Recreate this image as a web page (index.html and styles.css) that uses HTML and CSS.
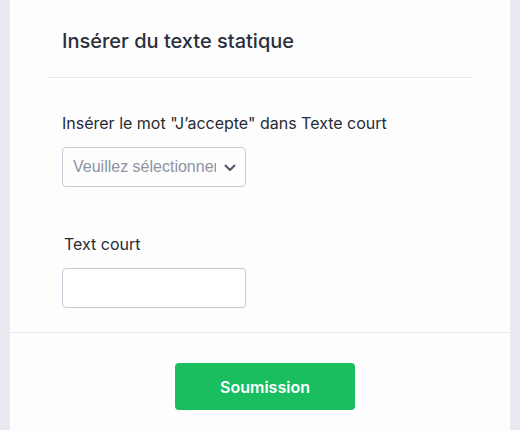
FILE: index.html
```html
<!DOCTYPE html>
<html lang="fr">
<head>
  <meta charset="UTF-8">
  <title>Insérer du texte statique</title>
  <link rel="stylesheet" href="styles.css">
</head>
<body>
  <div class="panneau">
    <div class="entete">
      <h2 class="titre">Insérer du texte statique</h2>
    </div>
    <div class="corps">
      <div class="champ">
        <label class="etiquette">Insérer le mot "J’accepte" dans Texte court</label>
        <div class="selection">
          <span class="placeholder">Veuillez sélectionner</span>
          <svg class="chevron" width="14" height="9" viewBox="0 0 14 9"><path d="M2.5 2.5l4.5 4.5 4.5-4.5" fill="none" stroke="#4b5563" stroke-width="2" stroke-linecap="round" stroke-linejoin="round"/></svg>
        </div>
      </div>
      <div class="champ champ-texte">
        <label class="etiquette">Text court</label>
        <input class="saisie" type="text">
      </div>
    </div>
    <div class="pied">
      <button class="bouton">Soumission</button>
    </div>
  </div>
</body>
</html>
```

FILE: styles.css
```css
body {
  margin: 0;
  padding: 0 10px;
  background: #e9eaef;
  font-family: Inter, "Noto Sans", sans-serif;
  color: #2b2f36;
}

.panneau {
  background: #fdfdfd;
  height: 430px;
  display: flex;
  flex-direction: column;
}

.entete {
  margin: 0 38px;
  padding: 28px 14px 23px;
  border-bottom: 1px solid #e8e9ee;
}

.titre {
  margin: 0;
  font-size: 20px;
  font-weight: 500;
  line-height: 26px;
  color: #2a2f3b;
}

.corps {
  padding: 35px 52px 24px;
}

.champ {
  display: flex;
  flex-direction: column;
  align-items: flex-start;
}

.champ-texte {
  margin-top: 47px;
}

.champ-texte .etiquette {
  padding-left: 2px;
}

.etiquette {
  font-size: 16px;
  line-height: 20px;
  margin-bottom: 14px;
  color: #262b35;
}

.selection {
  box-sizing: border-box;
  width: 184px;
  height: 40px;
  border: 1px solid #c6ccd7;
  border-radius: 4px;
  display: flex;
  align-items: center;
  padding: 0 8px 0 10px;
  gap: 7px;
  overflow: hidden;
}

.placeholder {
  flex: 1;
  white-space: nowrap;
  overflow: hidden;
  font-family: "Liberation Sans", Arial, sans-serif;
  font-size: 16px;
  color: #8c93a1;
}

.chevron {
  flex-shrink: 0;
}

.saisie {
  box-sizing: border-box;
  width: 184px;
  height: 40px;
  border: 1px solid #c6ccd7;
  border-radius: 4px;
  background: #fff;
  margin: 0;
}

.pied {
  border-top: 1px solid #e8e9ee;
  display: flex;
  justify-content: center;
  padding: 30px 0 0 10px;
}

.bouton {
  width: 180px;
  height: 47px;
  border: none;
  border-radius: 4px;
  background: #19be5f;
  color: #fff;
  font-family: Inter, "Noto Sans", sans-serif;
  font-size: 16px;
  font-weight: 600;
  cursor: pointer;
}
```
